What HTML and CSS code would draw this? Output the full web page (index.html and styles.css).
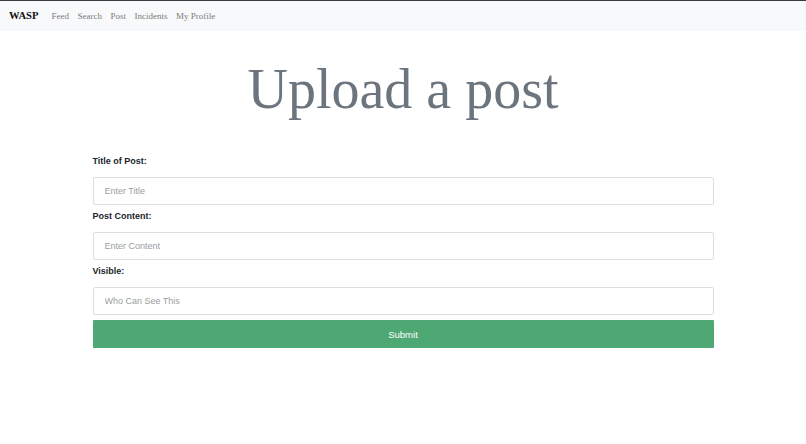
FILE: index.html
```html
<!DOCTYPE html>
<html lang="en">
<head>
<meta charset="utf-8">
<title>Upload a post</title>
<link rel="stylesheet" href="styles.css">
</head>
<body>
<nav class="navbar">
  <a class="brand" href="#">WASP</a>
  <ul class="links">
    <li><a href="#">Feed</a></li>
    <li><a href="#">Search</a></li>
    <li><a href="#">Post</a></li>
    <li><a href="#">Incidents</a></li>
    <li><a href="#">My Profile</a></li>
  </ul>
</nav>
<main class="page">
  <h1 class="title">Upload a post</h1>
  <form class="post-form">
    <label class="field-label" for="title">Title of Post:</label>
    <input class="field" id="title" type="text" placeholder="Enter Title">
    <label class="field-label" for="content">Post Content:</label>
    <input class="field" id="content" type="text" placeholder="Enter Content">
    <label class="field-label" for="visible">Visible:</label>
    <input class="field" id="visible" type="text" placeholder="Who Can See This">
    <button class="submit" type="submit">Submit</button>
  </form>
</main>
</body>
</html>
```
FILE: styles.css
```css
* { box-sizing: border-box; }
html, body { margin: 0; padding: 0; background: #fff; }
body { font-family: "Liberation Sans", Arial, sans-serif; }

.navbar {
  display: flex;
  align-items: baseline;
  height: 31px;
  padding: 9px 9px 0;
  background: #f8f9fa;
  border-top: 1px solid #3a3a3a;
  font-family: "Liberation Serif", "Times New Roman", serif;
}
.brand {
  font-size: 10.6px;
  line-height: 12px;
  font-weight: bold;
  color: #111;
  text-decoration: none;
  margin-right: 13px;
}
.links {
  display: flex;
  gap: 8.5px;
  list-style: none;
  margin: 0;
  padding: 0;
  font-size: 9px;
  line-height: 12px;
}
.links a {
  color: #7b7b7b;
  text-decoration: none;
}

.page {
  display: flex;
  flex-direction: column;
  align-items: center;
}
.title {
  margin: 25px 0 32px;
  font-family: "Liberation Serif", "Times New Roman", serif;
  font-size: 56px;
  font-weight: 300;
  line-height: 67px;
  color: #6c757d;
}
.post-form {
  width: 621px;
  display: flex;
  flex-direction: column;
}
.field-label {
  font-size: 9px;
  font-weight: bold;
  line-height: 12px;
  color: #212529;
  margin: 0 0 10px;
}
.field {
  height: 28px;
  width: 100%;
  padding: 0 11px;
  border: 1px solid #dcdfe2;
  border-radius: 2px;
  font-family: "Liberation Sans", Arial, sans-serif;
  font-size: 9px;
  color: #333;
  background: #fff;
  margin-bottom: 5px;
}
.field::placeholder { color: #9a9ea2; }
.submit {
  height: 28px;
  width: 100%;
  border: none;
  border-radius: 1px;
  background: #4ea873;
  color: #fff;
  font-family: "Liberation Sans", Arial, sans-serif;
  font-size: 9.5px;
}
```
